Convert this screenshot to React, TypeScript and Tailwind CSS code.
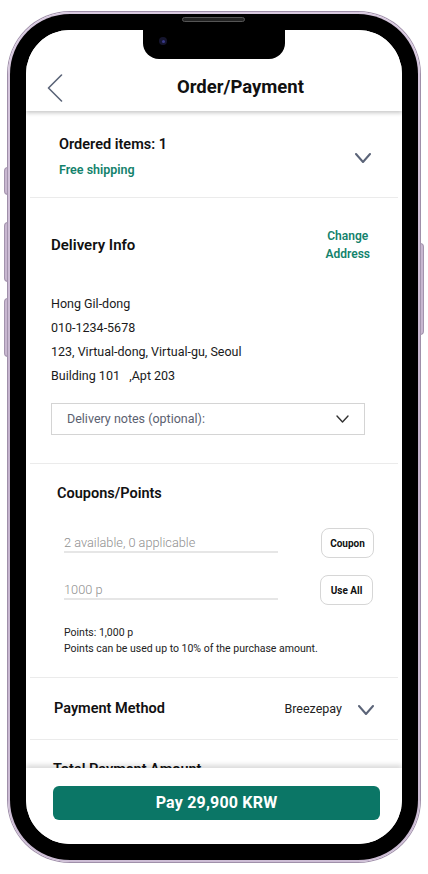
import React from 'react';

const Chevron: React.FC<{ className?: string; w?: number; h?: number; sw?: number }> = ({ className, w = 16, h = 10, sw = 2 }) => (
  <svg width={w} height={h} viewBox={`0 0 ${w} ${h}`} fill="none" className={className}>
    <polyline points={`1,1 ${w / 2},${h - 1} ${w - 1},1`} stroke="currentColor" strokeWidth={sw} strokeLinecap="round" strokeLinejoin="round" />
  </svg>
);

const Divider = () => <div className="mx-[4px] h-px bg-[#ebebeb] shrink-0" />;

const App: React.FC = () => {
  return (
    <div className="w-[428px] h-[874px] bg-white pt-[12px] pl-[8px] font-['Roboto',sans-serif]">
      {/* Phone frame */}
      <div className="relative w-[412px] h-[850px] rounded-[62px] bg-gradient-to-b from-[#d8c9df] via-[#c3b2cc] to-[#cdbdd5] p-[2px] shadow-[0_0_0_1px_#9f8fa9]">
        {/* side buttons */}
        <div className="absolute -left-[4px] top-[155px] w-[4px] h-[28px] rounded-l-sm bg-[#c8b7d0] border border-[#a393ad]" />
        <div className="absolute -left-[4px] top-[210px] w-[4px] h-[60px] rounded-l-sm bg-[#c8b7d0] border border-[#a393ad]" />
        <div className="absolute -left-[4px] top-[286px] w-[4px] h-[59px] rounded-l-sm bg-[#c8b7d0] border border-[#a393ad]" />
        <div className="absolute -right-[4px] top-[231px] w-[4px] h-[92px] rounded-r-sm bg-[#c8b7d0] border border-[#a393ad]" />

        <div className="relative h-full rounded-[60px] bg-black p-[16px]">
          {/* speaker */}
          <div className="absolute top-[3px] left-[172px] w-[63px] h-[5px] rounded-full bg-[#222] border border-[#555]" />

          {/* Screen */}
          <div className="relative h-full rounded-[44px] bg-white overflow-hidden flex flex-col">
            {/* notch */}
            <div className="absolute top-0 left-[117px] w-[142px] h-[29px] bg-black rounded-b-[16px] z-20">
              <div className="absolute left-[16px] top-[7px] w-[8px] h-[8px] rounded-full bg-[#15152e] flex items-center justify-center">
                <div className="w-[3px] h-[3px] rounded-full bg-[#3a3a8a]" />
              </div>
            </div>

            {/* Header */}
            <div className="relative z-10 h-[81px] shrink-0 bg-white flex items-end pb-[10px] pl-[21px] shadow-[0_2px_4px_rgba(0,0,0,0.22)]">
              <svg width="16" height="28" viewBox="0 0 16 28" fill="none" className="text-[#5b6478] mb-[-1px]">
                <polyline points="14.5,1 1.5,14 14.5,27" stroke="currentColor" strokeWidth="1.6" strokeLinecap="round" strokeLinejoin="round" />
              </svg>
              <h1 className="ml-[114px] mb-[2px] text-[18.5px] leading-[24px] font-bold text-[#111]">Order/Payment</h1>
            </div>

            {/* Content */}
            <div className="flex-1 overflow-hidden flex flex-col">
              {/* Ordered items */}
              <div className="h-[86px] shrink-0 flex justify-between pl-[33px] pr-[31px] pt-[24px]">
                <div>
                  <p className="text-[14.5px] leading-[20px] font-semibold text-[#111]">Ordered items: 1</p>
                  <p className="mt-[7px] text-[12.5px] leading-[16px] font-semibold text-[#13826c]">Free shipping</p>
                </div>
                <Chevron className="text-[#5b6478] mt-[18px]" w={16} h={10} />
              </div>
              <Divider />

              {/* Delivery info */}
              <div className="h-[265px] shrink-0 pl-[25px] pt-[29px]">
                <div className="flex items-center justify-between pr-[32px]">
                  <h2 className="text-[15px] leading-[20px] font-semibold text-[#111]">Delivery Info</h2>
                  <button className="text-[12px] leading-[18px] font-semibold text-[#13826c] text-center">
                    Change<br />Address
                  </button>
                </div>
                <div className="mt-[29px] text-[12.5px] leading-[24px] text-[#1a1a1a]">
                  <p>Hong Gil-dong</p>
                  <p>010-1234-5678</p>
                  <p>123, Virtual-dong, Virtual-gu, Seoul</p>
                  <p className="whitespace-pre">Building 101   ,Apt 203</p>
                </div>
                <div className="mt-[15px] mr-[37px] h-[32px] border border-[#d4d4d4] flex items-center justify-between pl-[15px] pr-[15px]">
                  <span className="text-[12.5px] text-[#5b6170]">Delivery notes (optional):</span>
                  <Chevron className="text-[#333]" w={13} h={8} sw={1.4} />
                </div>
              </div>
              <Divider />

              {/* Coupons / points */}
              <div className="h-[213px] shrink-0 pl-[31px] pr-[28px] pt-[20px]">
                <h2 className="text-[14.5px] leading-[20px] font-semibold text-[#111]">Coupons/Points</h2>
                <div className="mt-[24px] h-[30px] flex items-center justify-between pl-[7px]">
                  <div className="w-[214px] border-b-2 border-[#e6e6e6] text-[12.75px] leading-[17px] font-light text-[#8f8f8f]">2 available, 0 applicable</div>
                  <button className="w-[53px] h-[30px] rounded-lg border border-[#d6d6d6] text-[10px] font-bold text-[#111]">Coupon</button>
                </div>
                <div className="mt-[17px] h-[30px] flex items-center justify-between pl-[7px] pr-[1px]">
                  <div className="w-[214px] border-b-2 border-[#e6e6e6] text-[12.75px] leading-[17px] font-light text-[#8f8f8f]">1000 p</div>
                  <button className="w-[53px] h-[30px] rounded-lg border border-[#d6d6d6] text-[10px] font-bold text-[#111]">Use All</button>
                </div>
                <div className="mt-[20px] pl-[7px] text-[10.5px] leading-[16px] text-[#222]">
                  <p>Points: 1,000 p</p>
                  <p>Points can be used up to 10% of the purchase amount.</p>
                </div>
              </div>
              <Divider />

              {/* Payment method */}
              <div className="h-[61px] shrink-0 flex items-center justify-between pl-[28px] pr-[28px]">
                <h2 className="text-[14.5px] leading-[20px] font-semibold text-[#111]">Payment Method</h2>
                <div className="flex items-center gap-[16px] mt-[2px]">
                  <span className="text-[12.5px] text-[#222]">Breezepay</span>
                  <Chevron className="text-[#5b6478]" w={16} h={10} />
                </div>
              </div>
              <Divider />

              {/* Total */}
              <div className="pl-[27px] pt-[20px]">
                <h2 className="text-[14.5px] leading-[20px] font-semibold text-[#111]">Total Payment Amount</h2>
              </div>
            </div>

            {/* Bottom pay bar */}
            <div className="relative z-10 h-[76px] shrink-0 bg-white pl-[27px] pt-[18px] shadow-[0_-3px_5px_rgba(0,0,0,0.15)]">
              <button className="w-[327px] h-[34px] rounded-[6px] bg-[#0b7666] text-white text-[16px] font-bold tracking-[0.2px]">
                Pay 29,900 KRW
              </button>
            </div>
          </div>
        </div>
      </div>
    </div>
  );
};

export default App;
